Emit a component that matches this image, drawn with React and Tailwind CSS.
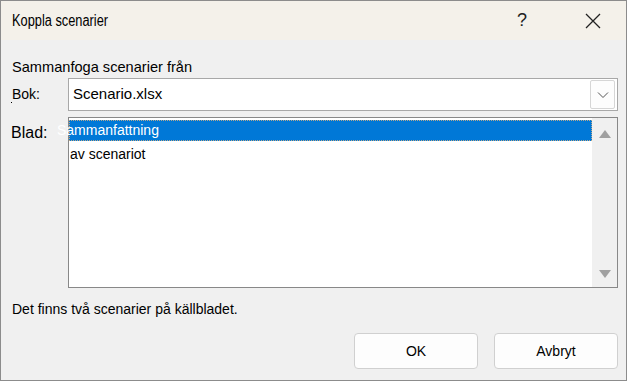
const ChevronDown = () => (
    <svg width="12" height="8" viewBox="0 0 12 8" fill="none">
        <path d="M1 1.5 L6 6.5 L11 1.5" stroke="#555" strokeWidth="1" />
    </svg>
);

const App = () => {
    return (
        <div className="w-[627px] h-[381px] bg-[#f0f0f0] border border-[#8c8c8c] flex flex-col overflow-hidden" style={{ fontFamily: '"Liberation Sans", Arial, sans-serif' }}>
            <div className="h-[39px] shrink-0 bg-[#f4f1ea] flex items-center pl-[11px]">
                <span className="text-[16px] text-black inline-block scale-x-[0.8] origin-left whitespace-nowrap">Koppla scenarier</span>
                <div className="ml-auto flex items-center">
                    <span className="text-[18px] text-[#222] w-[20px] text-center mr-[53px]">?</span>
                    <svg width="16" height="16" viewBox="0 0 16 16" className="mr-[25px]">
                        <path d="M1 1 L15 15 M15 1 L1 15" stroke="#222" strokeWidth="1.3" />
                    </svg>
                </div>
            </div>

            <div className="flex-1 flex flex-col pl-[10px] pr-[8px]">
                <div className="mt-[18px] h-[18px] text-[14.6px] leading-[18px] text-black pl-[1px]">Sammanfoga scenarier från</div>

                <div className="mt-[2px] flex items-center">
                    <div className="relative w-[57px] text-[14px] text-black pl-[1px]">
                        <span className="absolute left-0 bottom-[2px] w-[1px] h-[1px] bg-black" />
                        Bok:
                    </div>
                    <div className="flex-1 h-[33px] bg-white border border-[#a8a8a8] flex items-center pl-[4px] pr-[2px]">
                        <span className="text-[15px] text-black">Scenario.xlsx</span>
                        <div className="ml-auto w-[25px] h-[29px] border border-[#d6d6d6] rounded-[2px] bg-[#fdfdfd] flex items-center justify-center">
                            <ChevronDown />
                        </div>
                    </div>
                </div>

                <div className="mt-[6px] flex items-start">
                    <div className="w-[57px] text-[16px] text-black pt-[4px]">Blad:</div>
                    <div className="flex-1 h-[171px] bg-white border border-[#888] flex">
                        <div className="flex-1 flex flex-col pt-[1px]">
                            <div className="h-[21px] mt-[1px] bg-[#0078d7] border border-dotted border-[#b9a88c] flex items-center">
                                <span className="text-[14px] text-white -ml-[13px]">Sammanfattning</span>
                            </div>
                            <div className="h-[26px] flex items-center pl-[1px] text-[14px] text-black">av scenariot</div>
                        </div>
                        <div className="w-[25px] bg-[#f0f0f0] flex flex-col items-center justify-between pt-[12px] pb-[9px]">
                            <svg width="12" height="8" viewBox="0 0 12 8"><path d="M6 0 L12 8 L0 8 Z" fill="#a0a0a0" /></svg>
                            <svg width="12" height="8" viewBox="0 0 12 8"><path d="M0 0 L12 0 L6 8 Z" fill="#a0a0a0" /></svg>
                        </div>
                    </div>
                </div>

                <div className="mt-[11px] text-[14px] text-black pl-[1px]">Det finns två scenarier på källbladet.</div>

                <div className="mt-auto mb-[11px] flex justify-end gap-[16px]">
                    <button className="w-[124px] h-[36px] bg-[#fdfdfd] border border-[#d0d0d0] rounded-[4px] text-[14px] text-black">OK</button>
                    <button className="w-[124px] h-[36px] bg-[#fdfdfd] border border-[#d0d0d0] rounded-[4px] text-[14px] text-black">Avbryt</button>
                </div>
            </div>
        </div>
    );
};

export default App;
